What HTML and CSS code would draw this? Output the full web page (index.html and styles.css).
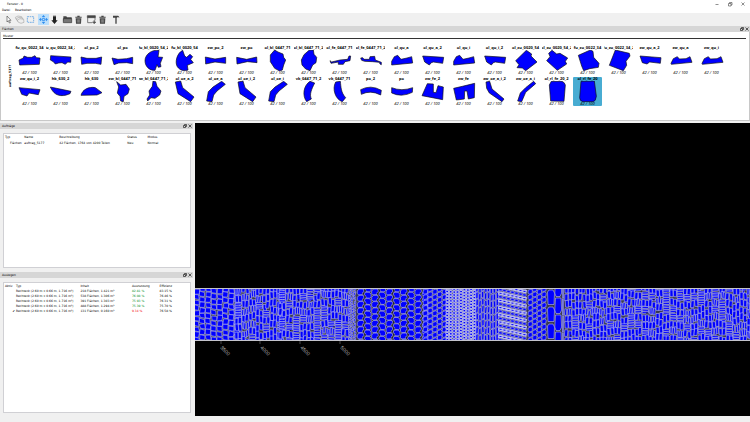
FILE: index.html
```html
<!DOCTYPE html>
<html lang="de">
<head>
<meta charset="utf-8">
<title>Fenster - 0</title>
<link rel="stylesheet" href="styles.css">
</head>
<body>
<header class="titlebar">
  <span class="title">Fenster - 0</span>
  <div class="window-controls">
    <button aria-label="Minimieren"><svg viewBox="0 0 6 6"><path d="M1.5 3.5h3"/></svg></button>
    <button aria-label="Wiederherstellen"><svg viewBox="0 0 6 6"><path d="M1.5 2.5h2.5v2.500h-2.500zM2.500 2.500v-1h2.500v2.500h-1"/></svg></button>
    <button aria-label="Schließen"><svg viewBox="0 0 6 6"><path d="M1.500 1.500l3 3M4.500 1.500l-3 3"/></svg></button>
  </div>
</header>
<nav class="menubar"><button>Datei</button><button>Bearbeiten</button></nav>
<div class="toolbar">
  <div class="group">
    <button aria-label="Auswahl"><svg viewBox="0 0 33 33"><path d="M12 6v18l4-4 3 7 3-1-3-7h5z" fill="#fff" stroke="#444" stroke-width="1.800"/></svg></button>
    <button aria-label="Stapel"><svg viewBox="0 0 33 33"><g fill="#eee" stroke="#999" stroke-width="1.600"><path d="M4 10l8-4 11 2 1 9-9 2-9-3z"/><path d="M7 14l8-4 11 2 1 9-9 2-9-3z"/><path d="M10 18l8-4 11 2 1 9-9 3-9-4z"/></g></svg></button>
    <button aria-label="Rahmen"><svg viewBox="0 0 33 33"><path d="M7 8h19v17H7z" fill="none" stroke="#3d8fe0" stroke-width="2" stroke-dasharray="5 2"/></svg></button>
  </div>
  <div class="group">
    <button class="active" aria-label="Verschieben"><svg viewBox="0 0 33 33"><path d="M16.500 3l5 6h-10zM16.500 30l5-6h-10zM3 16.500l6-5v10zM30 16.500l-6-5v10zM13 11h7v3h-7zM13 19h7v3h-7zM10 14h4v5h-4zM19 14h4v5h-4z" fill="#2d8df0"/></svg></button>
    <button aria-label="Ablegen"><svg viewBox="0 0 33 33"><path d="M12 5h9v3h-9zM12 9h9v10h5l-9.500 11L7 19h5z" fill="#222"/></svg></button>
  </div>
  <div class="group">
    <button aria-label="Öffnen"><svg viewBox="0 0 33 33"><path d="M4 7h9l2 3h14v5H7L4 23z" fill="#444"/><path d="M4 14h25v12H4z" fill="#777" stroke="#333" stroke-width="2"/></svg></button>
    <button aria-label="Löschen"><svg viewBox="0 0 33 33"><path d="M7 8h6V5h7v3h6v3H7zM8 13h17l-1 16H9z" fill="#444"/><path d="M13 16v10M16.500 16v10M20 16v10" stroke="#bbb" stroke-width="1.500"/></svg></button>
  </div>
  <div class="group">
    <button aria-label="Neue Fläche"><svg viewBox="0 0 33 33"><path d="M4 5h24v6H4zM5 11v15h13M27 11v8" fill="none" stroke="#444" stroke-width="2"/><path d="M4 5h24v6H4zM23 19h3v4h4v3h-4v4h-3v-4h-4v-3h4z" fill="#444"/></svg></button>
    <button aria-label="Fläche löschen"><svg viewBox="0 0 33 33"><path d="M7 8h6V5h7v3h6v3H7zM8 13h17l-1 16H9z" fill="#444"/><path d="M13 16v10M16.500 16v10M20 16v10" stroke="#bbb" stroke-width="1.500"/></svg></button>
  </div>
  <div class="group">
    <button aria-label="Werkzeug"><svg viewBox="0 0 33 33"><path d="M9 5h15q4 1 4 7-2-3-6-3v2h-2v18h-4V11H9z" fill="#444"/></svg></button>
  </div>
</div>

<section class="dock parts">
  <div class="dock-title"><h2>Flächen</h2><div class="dock-buttons"><button aria-label="Lösen"><svg viewBox="0 0 4 4"><path d="M.5 1.500h2v2h-2zM1.500 1.500v-1h2v2h-1"/></svg></button><button aria-label="Schließen"><svg viewBox="0 0 4 4"><path d="M.5.5l3 3M3.500.5l-3 3"/></svg></button></div></div>
  <div class="parts-body">
    <h3>Muster</h3>
    <div class="parts-group">
      <span class="group-name">auftrag_5177</span>
      <div class="thumbs">
        <figure><b>fu_qu_0022_34</b><svg viewBox="0 0 87 63"><path d="M12 30L25 24 27 18 38 22 50 22 60 17 64 23 75 24 73 43 14 45z"/></svg><figcaption>42 / 100</figcaption></figure>
        <figure><b>fu_qu_0022_34_2</b><svg viewBox="0 0 87 63"><path d="M14 17L75 21 74 37 65 36 58 43 48 38 38 39 28 42 22 35 13 30z"/></svg><figcaption>42 / 100</figcaption></figure>
        <figure><b>ol_po_2</b><svg viewBox="0 0 87 63"><path d="M12 21L30 25 57 25 74 21 72 43 55 40 30 40 14 43z"/></svg><figcaption>42 / 100</figcaption></figure>
        <figure><b>ol_po</b><svg viewBox="0 0 87 63"><path d="M12 24L30 28 56 26 74 22 74 41 56 38 32 39 18 44z"/></svg><figcaption>42 / 100</figcaption></figure>
        <figure><b>fu_bl_0020_54_2</b><svg viewBox="0 0 87 63"><path d="M60 1C40-2 18 12 18 32C18 50 32 62 48 61L54 44 58 52 66 50 64 40 71 22 57 21z"/></svg><figcaption>42 / 100</figcaption></figure>
        <figure><b>fu_bl_0020_54</b><svg viewBox="0 0 87 63"><path d="M38 1C20 10 14 38 22 50C30 62 44 64 54 60L52 46 70 38 62 28 68 20 60 13 50 22 44 18z"/></svg><figcaption>42 / 100</figcaption></figure>
        <figure><b>zw_po_2</b><svg viewBox="0 0 87 63"><path d="M13 21L42 27 74 22 74 40 42 36 14 42z"/></svg><figcaption>42 / 100</figcaption></figure>
        <figure><b>zw_po</b><svg viewBox="0 0 87 63"><path d="M14 22L44 28 74 21 75 38 46 35 15 42z"/></svg><figcaption>42 / 100</figcaption></figure>
        <figure><b>ol_bl_0447_71</b><svg viewBox="0 0 87 63"><path d="M35 0L45 6 60 12 62 22 68 30 62 45 58 60 50 63 35 55 22 35 22 15z"/></svg><figcaption>42 / 100</figcaption></figure>
        <figure><b>ol_bl_0447_71_2</b><svg viewBox="0 0 87 63"><path d="M45 1L58 0 60 13 68 22 66 38 56 45 48 62 35 57 24 45 22 30 30 14z"/></svg><figcaption>42 / 100</figcaption></figure>
        <figure><b>ol_fe_0447_71</b><svg viewBox="0 0 87 63"><path d="M15 32L20 36 45 30 68 28 72 18 77 18 75 32 60 35 55 43 40 43 40 36 18 40z"/></svg><figcaption>42 / 100</figcaption></figure>
        <figure><b>ol_fe_0447_71_2</b><svg viewBox="0 0 87 63"><path d="M14 24L20 23 24 28 40 28 42 20 56 19 58 30 76 37 76 44 72 42 70 37 50 35 26 34 17 31z"/></svg><figcaption>42 / 100</figcaption></figure>
        <figure><b>ol_qu_a</b><svg viewBox="0 0 87 63"><path d="M14 34L22 20 32 16 42 28 60 24 74 20 77 39 14 45z"/></svg><figcaption>42 / 100</figcaption></figure>
        <figure><b>ol_qu_a_2</b><svg viewBox="0 0 87 63"><path d="M14 18L77 22 74 40 46 36 40 38 34 45 20 36z"/></svg><figcaption>42 / 100</figcaption></figure>
        <figure><b>ol_qu_i</b><svg viewBox="0 0 87 63"><path d="M14 34L22 20 32 16 42 28 60 24 74 20 77 39 14 45z"/></svg><figcaption>42 / 100</figcaption></figure>
        <figure><b>ol_qu_i_2</b><svg viewBox="0 0 87 63"><path d="M14 18L77 22 74 40 46 36 40 38 34 45 20 36z"/></svg><figcaption>42 / 100</figcaption></figure>
        <figure><b>ol_zu_0020_54</b><svg viewBox="0 0 87 63"><path d="M14 32L46 1 62 12 60 18 78 36 44 62 34 54 18 53 24 44z"/></svg><figcaption>42 / 100</figcaption></figure>
        <figure><b>ol_zu_0020_54_2</b><svg viewBox="0 0 87 63"><path d="M30 1L44 12 54 10 77 24 70 34 74 42 46 61 14 32 24 20 20 10z"/></svg><figcaption>42 / 100</figcaption></figure>
        <figure><b>fu_zu_0022_34</b><svg viewBox="0 0 87 63"><path d="M16 16L52 0 60 4 62 22 78 40 76 52 50 56 32 62 26 48z"/></svg><figcaption>42 / 100</figcaption></figure>
        <figure><b>fu_zu_0022_34_2</b><svg viewBox="0 0 87 63"><path d="M34 0L76 10 78 18 66 34 68 46 58 62 16 46z"/></svg><figcaption>42 / 100</figcaption></figure>
        <figure><b>zw_qu_a_2</b><svg viewBox="0 0 87 63"><path d="M15 18L78 23 76 40 44 36 36 42 22 38z"/></svg><figcaption>42 / 100</figcaption></figure>
        <figure><b>zw_qu_a</b><svg viewBox="0 0 87 63"><path d="M15 40L22 26 34 20 40 27 60 26 72 20 78 37 16 43z"/></svg><figcaption>42 / 100</figcaption></figure>
        <figure><b>zw_qu_i</b><svg viewBox="0 0 87 63"><path d="M15 40L22 26 34 20 40 27 60 26 72 20 78 37 16 43z"/></svg><figcaption>42 / 100</figcaption></figure>
        <figure><b>zw_qu_i_2</b><svg viewBox="0 0 87 63"><path d="M12 20L75 26 70 41 42 36 36 45 20 40z"/></svg><figcaption>42 / 100</figcaption></figure>
        <figure><b>hk_630_2</b><svg viewBox="0 0 87 63"><path d="M13 18L75 31 72 38C45 50 24 44 13 18z"/></svg><figcaption>42 / 100</figcaption></figure>
        <figure><b>hk_630</b><svg viewBox="0 0 87 63"><path d="M12 43C16 26 35 16 55 20L75 35 60 42z"/></svg><figcaption>42 / 100</figcaption></figure>
        <figure><b>zw_bl_0447_71</b><svg viewBox="0 0 87 63"><path d="M26 2L38 12 54 10 64 24 60 38 48 46 46 62 38 60 36 46 28 36 32 18z"/></svg><figcaption>42 / 100</figcaption></figure>
        <figure><b>zw_bl_0447_71_2</b><svg viewBox="0 0 87 63"><path d="M42 0L50 2 54 16 66 30 62 42 48 52 36 50 26 60 24 54 32 42 30 30 40 16z"/></svg><figcaption>42 / 100</figcaption></figure>
        <figure><b>ol_oe_a_2</b><svg viewBox="0 0 87 63"><path d="M16 3L32 0 38 20 72 48 62 62 24 38z"/></svg><figcaption>42 / 100</figcaption></figure>
        <figure><b>ol_oe_a</b><svg viewBox="0 0 87 63"><path d="M62 1L73 10 48 30 38 42 33 62 17 60 22 32 36 18z"/></svg><figcaption>42 / 100</figcaption></figure>
        <figure><b>ol_oe_i_2</b><svg viewBox="0 0 87 63"><path d="M18 3L33 0 39 20 72 48 62 62 24 38z"/></svg><figcaption>42 / 100</figcaption></figure>
        <figure><b>ol_oe_i</b><svg viewBox="0 0 87 63"><path d="M62 1L73 10 48 30 38 42 33 62 17 60 22 32 36 18z"/></svg><figcaption>42 / 100</figcaption></figure>
        <figure><b>vk_0447_71_2</b><svg viewBox="0 0 87 63"><path d="M48 1L62 6C52 26 46 40 52 54L38 62C24 44 28 14 48 1z"/></svg><figcaption>42 / 100</figcaption></figure>
        <figure><b>vk_0447_71</b><svg viewBox="0 0 87 63"><path d="M32 3L46 1C48 18 48 36 62 50L52 62C32 56 20 24 32 3z"/></svg><figcaption>42 / 100</figcaption></figure>
        <figure><b>po_2</b><svg viewBox="0 0 87 63"><path d="M14 26Q44 10 76 28L74 42Q44 26 16 40z"/></svg><figcaption>42 / 100</figcaption></figure>
        <figure><b>po</b><svg viewBox="0 0 87 63"><path d="M14 20Q44 32 77 20L76 34Q44 50 14 36z"/></svg><figcaption>42 / 100</figcaption></figure>
        <figure><b>zw_fe_2</b><svg viewBox="0 0 87 63"><path d="M28 8L46 9 46 34 54 35 60 14 76 18 74 56 12 44z"/></svg><figcaption>42 / 100</figcaption></figure>
        <figure><b>zw_fe</b><svg viewBox="0 0 87 63"><path d="M14 22L40 16 77 7 76 50 58 54 54 30 47 30 46 54 22 57z"/></svg><figcaption>42 / 100</figcaption></figure>
        <figure><b>zw_oe_a_i_2</b><svg viewBox="0 0 87 63"><path d="M18 3L29 1 36 24 72 54 66 62 28 36 20 22z"/></svg><figcaption>42 / 100</figcaption></figure>
        <figure><b>zw_oe_a_i</b><svg viewBox="0 0 87 63"><path d="M68 1L74 8 44 34 32 62 20 60 28 36 44 20z"/></svg><figcaption>42 / 100</figcaption></figure>
        <figure><b>ol_rl_fe_20_2</b><svg viewBox="0 0 87 63"><path d="M28 1L60 1Q68 4 70 12L66 61 26 60 22 12z"/></svg><figcaption>42 / 100</figcaption></figure>
        <figure class="selected"><b>ol_rl_fe_20</b><svg viewBox="0 0 87 63"><path d="M24 1L64 0 70 46Q68 62 60 62L30 62Q20 60 20 50z"/></svg><figcaption>42 / 100</figcaption></figure>
      </div>
    </div>
  </div>
</section>

<main class="workspace">
  <aside class="side">
    <section class="dock">
      <div class="dock-title"><h2>Aufträge</h2><div class="dock-buttons"><button aria-label="Lösen"><svg viewBox="0 0 4 4"><path d="M.5 1.500h2v2h-2zM1.500 1.500v-1h2v2h-1"/></svg></button><button aria-label="Schließen"><svg viewBox="0 0 4 4"><path d="M.5.5l3 3M3.500.5l-3 3"/></svg></button></div></div>
      <div class="list">
        <table class="orders">
          <colgroup><col><col><col><col><col></colgroup>
          <thead><tr><th>Typ</th><th>Name</th><th>Beschreibung</th><th>Status</th><th>Modus</th></tr></thead>
          <tbody><tr><td class="indent">Flächen</td><td>auftrag_5177</td><td>42 Flächen, 1764 von 4200 Teilen</td><td>Neu</td><td>Normal</td></tr></tbody>
        </table>
      </div>
    </section>
    <section class="dock">
      <div class="dock-title"><h2>Auslegen</h2><div class="dock-buttons"><button aria-label="Lösen"><svg viewBox="0 0 4 4"><path d="M.5 1.500h2v2h-2zM1.500 1.500v-1h2v2h-1"/></svg></button><button aria-label="Schließen"><svg viewBox="0 0 4 4"><path d="M.5.5l3 3M3.500.5l-3 3"/></svg></button></div></div>
      <div class="list">
        <table class="layouts">
          <colgroup><col><col><col><col><col></colgroup>
          <thead><tr><th>Aktiv</th><th>Typ</th><th>Inhalt</th><th>Ausnutzung</th><th>Effizienz</th></tr></thead>
          <tbody>
            <tr><td></td><td>Rechteck (2.60 m x 0.66 m, 1.716 m²)</td><td>218 Flächen, 1.421 m²</td><td class="good">82.81 %</td><td>83.15 %</td></tr>
            <tr><td></td><td>Rechteck (2.60 m x 0.66 m, 1.716 m²)</td><td>538 Flächen, 1.306 m²</td><td class="good">76.08 %</td><td>76.46 %</td></tr>
            <tr><td></td><td>Rechteck (2.60 m x 0.66 m, 1.716 m²)</td><td>391 Flächen, 1.303 m²</td><td class="good">75.93 %</td><td>76.31 %</td></tr>
            <tr><td></td><td>Rechteck (2.60 m x 0.66 m, 1.716 m²)</td><td>488 Flächen, 1.294 m²</td><td class="good">75.39 %</td><td>75.70 %</td></tr>
            <tr><td class="check">✔</td><td>Rechteck (2.60 m x 0.66 m, 1.716 m²)</td><td>131 Flächen, 0.160 m²</td><td class="bad">9.34 %</td><td>76.58 %</td></tr>
          </tbody>
        </table>
      </div>
    </section>
  </aside>
  <section class="canvas" aria-label="Auslegung">
    <svg viewBox="0 0 555 293" preserveAspectRatio="xMinYMid slice">
      <defs><clipPath id="sheet"><rect x="0" y="165" width="555" height="53"/></clipPath></defs>
      <rect class="sheet" x="-2" y="165.500" width="559" height="52"/>
      <g id="pieces" clip-path="url(#sheet)"></g>
      <path class="edge" d="M0 165.500H555M0 217.500H555"/>
      <path class="tick" d="M26 218v3M65 218v3M105 218v3M145 218v3"/>
      <g class="scale">
        <text transform="translate(25 225) rotate(45)">3500</text>
        <text transform="translate(65 225) rotate(45)">4000</text>
        <text transform="translate(105 225) rotate(45)">4500</text>
        <text transform="translate(145 225) rotate(45)">5000</text>
      </g>
    </svg>
  </section>
</main>
<footer class="statusbar"></footer>
<script src="nest.js"></script>
</body>
</html>
```
FILE: styles.css
```css
* { box-sizing: border-box; }
body {
  margin: 0;
  height: 100vh;
  display: flex;
  flex-direction: column;
  overflow: hidden;
  background: #f0f0f0;
  color: #000;
  font: 3px/4px "DejaVu Sans", sans-serif;
}
button {
  display: flex;
  align-items: center;
  justify-content: center;
  margin: 0;
  padding: 0;
  border: 0;
  background: none;
  color: inherit;
  font: inherit;
}
h2, h3, figure { margin: 0; font: inherit; }
svg { display: block; }

.titlebar {
  display: flex;
  justify-content: space-between;
  align-items: center;
  height: 7px;
  padding: 0 1px 0 7px;
  background: #fff;
}
.window-controls { display: flex; }
.window-controls button { width: 13px; }
.window-controls svg { width: 6px; height: 6px; fill: none; stroke: #444; stroke-width: .6; }
.menubar {
  display: flex;
  gap: 5px;
  height: 6px;
  padding: 0 2px;
  background: #fff;
}
.toolbar {
  display: flex;
  gap: 2px;
  height: 13px;
  padding: 1px 3px;
}
.group { display: flex; }
.group button, .group svg { width: 11px; height: 11px; }
.group .active { background: #bcdffb; }

.dock { display: flex; flex-direction: column; }
.dock-title {
  display: flex;
  align-items: center;
  justify-content: space-between;
  height: 6px;
  padding: 0 1px 0 2px;
  background: #d6d6d6;
}
.dock-buttons { display: flex; gap: 1px; }
.dock-buttons svg { width: 4px; height: 4px; fill: none; stroke: #222; stroke-width: .7; }

.parts { padding-bottom: 2px; }
.parts-body {
  padding: 2px 3px 14px 2px;
  border: 1px solid #c8c8c8;
  border-top: 0;
  background: #fff;
}
.parts-body h3 { border-bottom: 1px solid #333; }
.parts-group { display: flex; padding-top: 7px; }
.group-name {
  width: 12px;
  padding-right: 5px;
  writing-mode: vertical-rl;
  transform: rotate(180deg);
  text-align: center;
  font-weight: bold;
}
.thumbs {
  display: grid;
  flex: 1;
  grid-template-columns: repeat(23, 29px);
  gap: 2px;
}
.thumbs figure {
  display: flex;
  flex-direction: column;
  align-items: center;
  overflow: hidden;
  border-radius: 1px;
  font: 4px/4px "Open Sans", sans-serif;
}
.thumbs b { white-space: nowrap; }
.thumbs svg {
  width: 29px;
  height: 21px;
  fill: #00f;
  stroke: #111;
  stroke-width: 2;
  stroke-linejoin: round;
}
.thumbs figcaption { font-style: italic; }
.thumbs .selected { background: #48acd2; }

.workspace { display: flex; flex: 1; min-height: 0; }
.side {
  display: flex;
  flex-direction: column;
  flex: 0 0 26%;
  gap: 4px;
  padding-right: 1px;
}
.side .dock { flex: 1; }
.side .dock-title { margin-right: 1px; }
.list {
  flex: 1;
  margin: 4px 3px 0;
  padding: 0 1px;
  border: 1px solid #d0d0d4;
  background: #fff;
}
.side .dock:last-child .list { margin-bottom: 3px; }
table { width: 100%; table-layout: fixed; border-collapse: collapse; }
th, td {
  height: 5px;
  padding: 0;
  text-align: left;
  font-weight: normal;
  white-space: nowrap;
}
th { height: 6px; }
.orders col:nth-child(1) { width: 10.500%; }
.orders col:nth-child(2) { width: 19%; }
.orders col:nth-child(3) { width: 37%; }
.orders col:nth-child(4) { width: 11%; }
.layouts col:nth-child(1) { width: 6%; }
.layouts col:nth-child(2) { width: 35%; }
.layouts col:nth-child(3) { width: 28%; }
.layouts col:nth-child(4) { width: 15%; }
.indent { padding-left: 5px; }
.check { padding-right: 1px; text-align: right; }
.good { color: #008a18; }
.bad { color: #f00000; }

.canvas { flex: 1; min-width: 0; background: #000; }
.canvas svg { width: 100%; height: 100%; }
.sheet { fill: #3a3a50; }
#pieces { fill: #00f; stroke: #b8b8f0; stroke-width: .6; }
.edge { stroke: #c4c4cc; stroke-width: 1; }
.tick { stroke: #777; stroke-width: .6; }
.scale { fill: #bbb; font: 5px "Liberation Sans", sans-serif; }
.statusbar { height: 6px; }
```
FILE: nest.js
```js
// Draws the nested pieces of the sheet, zone by zone from left to right.
const TOP = 166, BOTTOM = 217;
let seed = 5177;
const rnd = () => (seed = (seed * 16807) % 2147483647) / 2147483647;
const jit = a => (rnd() - 0.5) * a;
const out = [];
const poly = (pts, width) => out.push(
  `<path d="M${pts.map(p => p.map(n => n.toFixed(1)).join(' ')).join('L')}z"` +
  (width ? ` stroke-width="${width}"` : '') + '/>');

// A small dark gap left between neighbouring pieces.
const gap = (x, y) => out.push(
  `<path d="M${x.toFixed(1)} ${y.toFixed(1)}h1.400v1.400h-1.400z" fill="#222" stroke="none"/>`);

// Four-sided pieces in columns, with a slant and some irregularity.
function quads(x0, x1, w, h, slant, noise, width) {
  for (let x = x0; x < x1; x += w) {
    for (let y = TOP - rnd() * h * 0.6; y < BOTTOM; y += h) {
      const a = jit(noise), b = jit(noise);
      poly([[x + a, y + b], [x + w - 0.7 + a, y + slant + jit(noise)],
        [x + w - 0.7 + b, y + h - 0.7 + slant], [x + b, y + h - 0.7 + a]], width);
    }
  }
}

// Long narrow pieces, mostly upright, with flat clusters in between.
function bars(x0, x1, flat) {
  for (let x = x0; x < x1; x += 7) {
    for (let y = TOP - rnd() * 6; y < BOTTOM; y += 7.3) {
      if (rnd() < flat) {
        for (let k = 0; k < 3; k++) {
          const t = y + k * 2.4, s = jit(1.2);
          poly([[x, t], [x + 6.6, t + s], [x + 6.4, t + 1.9 + s], [x + 0.3, t + 1.9]]);
        }
      } else {
        const n = rnd() < 0.2 ? 3 : 2, w = 7 / n;
        for (let k = 0; k < n; k++) {
          const l = x + k * w + jit(0.5), s = jit(1.4), d = jit(3);
          poly([[l, y + d], [l + w - 0.4, y + d + jit(1)], [l + w - 0.4 + s, y + 6.8 + d], [l + s, y + 6.6 + d]]);
        }
      }
      if (rnd() < 0.3) gap(x + 5 + jit(2), y + 6 + jit(2));
    }
  }
}

function fans(x0, x1, w, h) {
  for (let x = x0, c = 0; x < x1; x += w, c++) {
    for (let y = TOP - (c % 2) * 3; y < BOTTOM; y += h) {
      const m = c % 2 ? -1 : 1, cx = x + w / 2;
      poly([[cx - m * 3.3, y + 2], [cx - m * 1.6, y], [cx + m * 2.6, y], [cx + m * 3.4, y + 2.2],
        [cx + m * 2.2, y + 3.4], [cx + m * 1.8, y + 5.6], [cx - m * 2, y + 5.9], [cx - m * 3.3, y + 4.4]]);
      gap(cx + m * 2.8 - 0.7, y + 4);
    }
  }
}

function hexes(x0, x1, w, h) {
  for (let x = x0, c = 0; x < x1; x += w, c++) {
    for (let y = TOP - (c % 2) * h / 2; y < BOTTOM; y += h) {
      poly([[x + 0.1, y + 1.2], [x + w - 1.2, y], [x + w - 0.2, y + 1.8],
        [x + w - 0.5, y + h - 0.9], [x + 0.9, y + h - 0.2], [x + 0.1, y + h - 1.3]]);
    }
  }
}

quads(-1, 40, 5.8, 5.4, 0.5, 1.4);
bars(40, 84, 0.08);
bars(84, 154, 0.28);
quads(154, 161, 2.4, 2.6, 0.6, 1);
fans(162, 227, 7.2, 6.3);
hexes(228, 251, 4.8, 5.4);
quads(251, 281, 3.4, 3, 0.2, 0.4, 1);
quads(281, 304, 2.9, 7, -1, 0.7);
for (let x = 304; x < 332; x += 4) {
  for (let y = TOP - 8, r = 0; y < BOTTOM; y += 3.6, r++) {
    const t = y + (x - 304) * 0.22;
    poly([[x, t], [x + 3.3, t + 0.7], [x + 2.9, t + 3], [x - 0.4, t + 2.2]], r % 2 ? 1.3 : 0.6);
  }
}
hexes(333, 351, 4.6, 5.4);

// Rounded door-shaped pieces, interlocked in two columns.
for (let k = -1; k < 4; k++) {
  const y = TOP + k * 17;
  poly([[352.500, y + 3], [354, y + 1], [358, y + 1], [359.500, y + 4], [359, y + 15.500], [353, y + 15.500]]);
  poly([[360.500, y + 9], [366, y + 9], [366.600, y + 21], [365, y + 24.500], [361, y + 24.500], [359.800, y + 21]]);
}
quads(367.500, 369, 1.6, 17, 0, 0.2);
bars(370, 440, 0.12);
bars(440, 560, 0.26);

document.getElementById('pieces').innerHTML = out.join('');
```
